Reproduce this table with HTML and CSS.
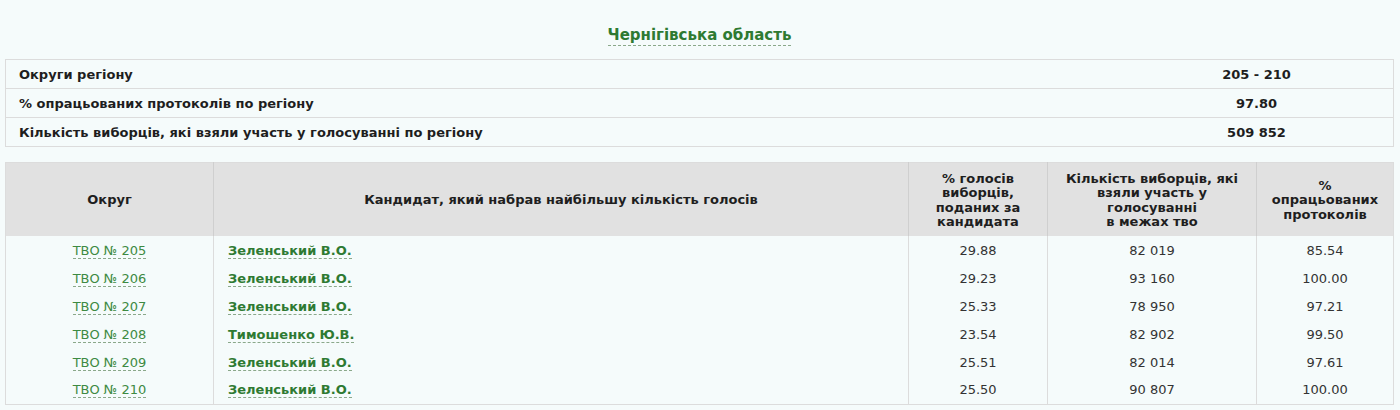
FILE: index.html
```html
<!DOCTYPE html>
<html>
<head lang="uk">
    <meta charset="UTF-8">
    <title>Чернігівська область</title>
    <link rel="stylesheet" href="styles.css">
</head>
<body>
    <div class="page">
        <h2 class="region"><a href="#">Чернігівська область</a></h2>

        <table class="summary">
            <tr>
                <td class="label">Округи регіону</td>
                <td class="value">205 - 210</td>
            </tr>
            <tr>
                <td class="label">% опрацьованих протоколів по регіону</td>
                <td class="value">97.80</td>
            </tr>
            <tr>
                <td class="label">Кількість виборців, які взяли участь у голосуванні по регіону</td>
                <td class="value">509 852</td>
            </tr>
        </table>

        <table class="results">
            <thead>
                <tr>
                    <th class="c-okrug">Округ</th>
                    <th class="c-name">Кандидат, який набрав найбільшу кількість голосів</th>
                    <th class="c-pct">% голосів виборців, поданих за кандидата</th>
                    <th class="c-voters">Кількість виборців, які взяли участь у голосуванні<br>в межах тво</th>
                    <th class="c-proc">% опрацьованих протоколів</th>
                </tr>
            </thead>
            <tbody>
                <tr>
                    <td><a class="tvo" href="#">ТВО № 205</a></td>
                    <td class="name"><a href="#">Зеленський В.О.</a></td>
                    <td>29.88</td>
                    <td>82 019</td>
                    <td>85.54</td>
                </tr>
                <tr>
                    <td><a class="tvo" href="#">ТВО № 206</a></td>
                    <td class="name"><a href="#">Зеленський В.О.</a></td>
                    <td>29.23</td>
                    <td>93 160</td>
                    <td>100.00</td>
                </tr>
                <tr>
                    <td><a class="tvo" href="#">ТВО № 207</a></td>
                    <td class="name"><a href="#">Зеленський В.О.</a></td>
                    <td>25.33</td>
                    <td>78 950</td>
                    <td>97.21</td>
                </tr>
                <tr>
                    <td><a class="tvo" href="#">ТВО № 208</a></td>
                    <td class="name"><a href="#">Тимошенко Ю.В.</a></td>
                    <td>23.54</td>
                    <td>82 902</td>
                    <td>99.50</td>
                </tr>
                <tr>
                    <td><a class="tvo" href="#">ТВО № 209</a></td>
                    <td class="name"><a href="#">Зеленський В.О.</a></td>
                    <td>25.51</td>
                    <td>82 014</td>
                    <td>97.61</td>
                </tr>
                <tr>
                    <td><a class="tvo" href="#">ТВО № 210</a></td>
                    <td class="name"><a href="#">Зеленський В.О.</a></td>
                    <td>25.50</td>
                    <td>90 807</td>
                    <td>100.00</td>
                </tr>
            </tbody>
        </table>
    </div>
</body>
</html>
```

FILE: styles.css
```css
* {
    margin: 0;
    padding: 0;
}
body {
    background: #f5fbfb;
    font-family: "DejaVu Sans", Verdana, sans-serif;
    font-size: 13px;
    color: #222;
}
.page {
    padding: 0 6px 0 5px;
}
a {
    text-decoration: none;
    border-bottom: 1px dashed #8aa88a;
}
.region {
    text-align: center;
    font-size: 15px;
    font-weight: bold;
    padding: 26px 0 15px;
    line-height: 18px;
}
.region a {
    color: #2e7a32;
    padding-bottom: 1px;
}
table {
    width: 100%;
    border-collapse: collapse;
}
/* верхня таблиця */
.summary {
    margin-bottom: 15px;
}
.summary td {
    border: 1px solid #dcdcdc;
    height: 28px;
    font-weight: bold;
    color: #1e1e1e;
}
.summary .label {
    padding-left: 13px;
    width: 1101px;
    border-right: none;
}
.summary .value {
    text-align: center;
    border-left: none;
}
/* таблиця округів */
.results {
    border: 1px solid #dcdcdc;
}
.results th {
    background: #e1e1e1;
    height: 71px;
    font-weight: bold;
    line-height: 14.5px;
    border-left: 1px solid #cfcfcf;
    padding: 2px 6px 0;
    color: #1e1e1e;
}
.results th:first-child {
    border-left: none;
}
.results th.c-proc {
    padding: 2px 12px 0;
}
.c-okrug { width: 195px; }
.c-name { width: 682px; }
.c-pct { width: 126px; }
.c-voters { width: 196px; }
.results td {
    text-align: center;
    height: 27.8px;
    border-left: 1px solid #dcdcdc;
    color: #333;
}
.results td:first-child {
    border-left: none;
}
.results tbody tr:first-child td {
    padding-top: 1px;
}
.results .name {
    text-align: left;
    padding-left: 14px;
}
.results .name a {
    color: #2e7a32;
    font-weight: bold;
}
.results .tvo {
    color: #3d8a42;
}
```
